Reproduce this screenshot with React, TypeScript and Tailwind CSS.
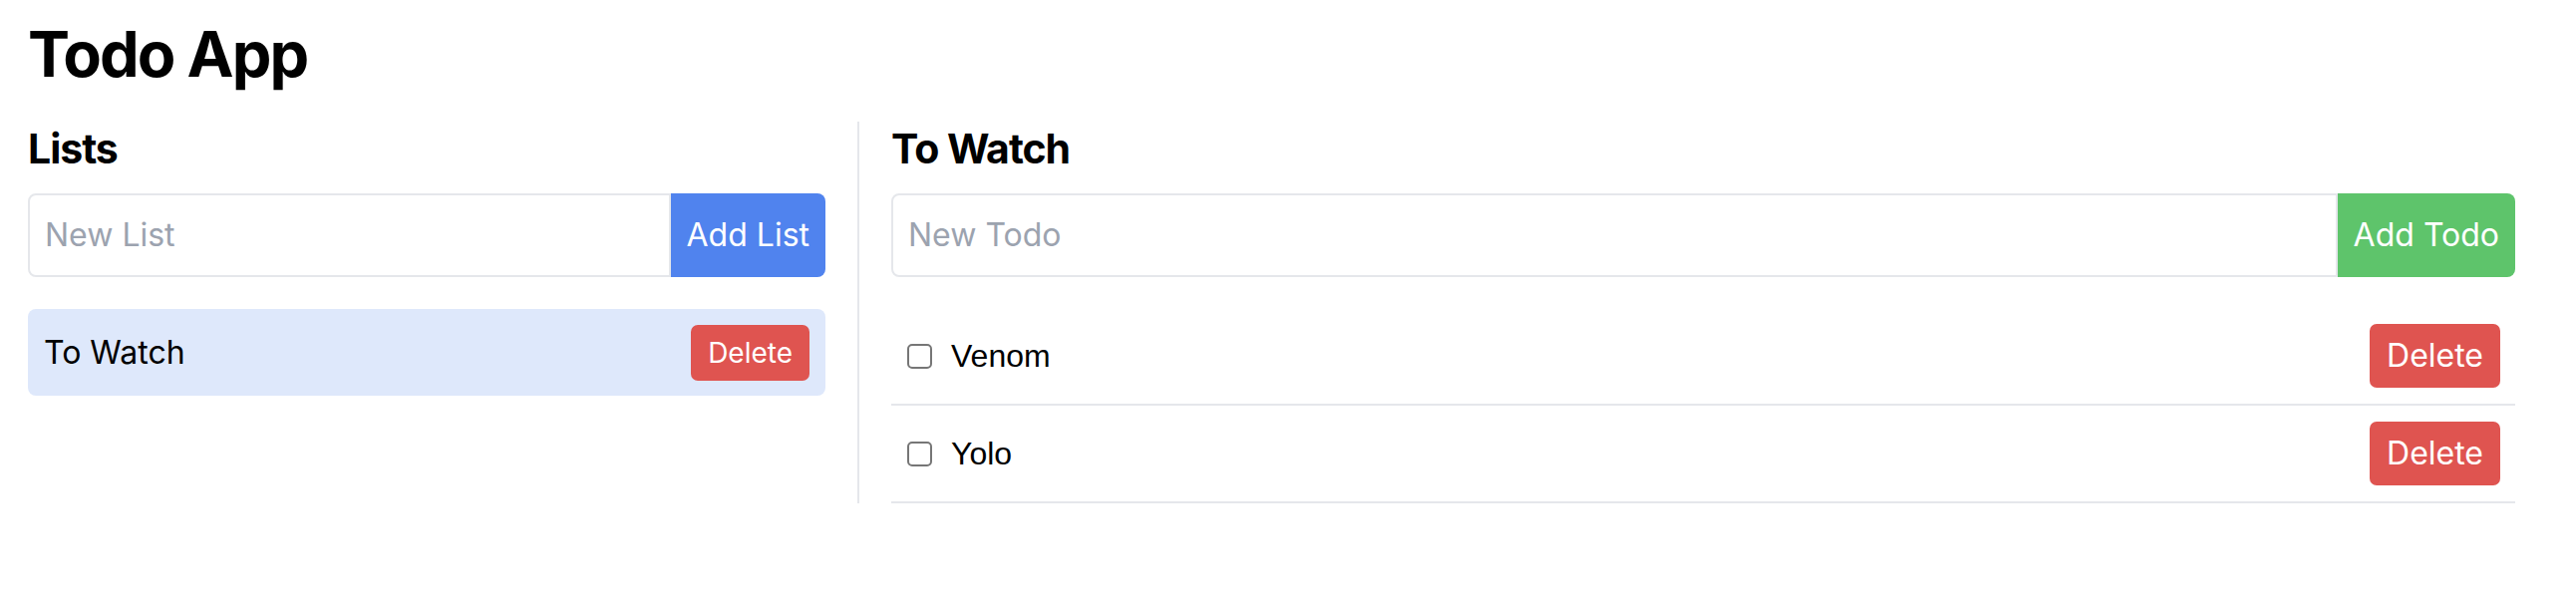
import React from "react";

export default function App() {
  const todos = ["Venom", "Yolo"];
  return (
    <div className="min-h-[606px] bg-white pl-[28px] pr-[61px] pt-[19px] font-['Inter',sans-serif] text-black">
      <h1 className="text-[63px] leading-[70px] font-bold tracking-[-0.03em] mb-[33px]">Todo App</h1>
      <div className="flex">
        <div className="w-[800px] mr-[32px]">
          <h2 className="text-[41px] leading-[55px] font-bold tracking-[-0.025em] mb-[17px]">Lists</h2>
          <div className="flex h-[84px]">
            <input
              className="flex-1 min-w-0 border-2 border-[#e5e7eb] rounded-l-[8px] px-[15px] text-[32px] outline-none placeholder:text-[#9ca3af]"
              placeholder="New List"
            />
            <button className="px-[16px] bg-[#5083ee] text-white text-[32px] rounded-r-[8px]">Add List</button>
          </div>
          <div className="mt-[32px] flex items-center justify-between bg-[#dee8fb] rounded-[8px] pl-[16px] pr-[16px] pt-[16px] pb-[15px]">
            <span className="text-[32px] leading-[48px]">To Watch</span>
            <button className="text-[28px] leading-[40px] px-[17px] py-[8px] rounded-[7px] bg-[#df5450] text-white">Delete</button>
          </div>
        </div>
        <div className="flex-1 border-l-2 border-[#e5e7eb] pl-[32px]">
          <h2 className="text-[41px] leading-[55px] font-bold tracking-[-0.025em] mb-[17px]">To Watch</h2>
          <div className="flex h-[84px]">
            <input
              className="flex-1 min-w-0 border-2 border-[#e5e7eb] rounded-l-[8px] px-[15px] text-[32px] outline-none placeholder:text-[#9ca3af]"
              placeholder="New Todo"
            />
            <button className="px-[16px] bg-[#5ec46b] text-white text-[32px] rounded-r-[8px]">Add Todo</button>
          </div>
          <ul className="mt-[31px]">
            {todos.map((t) => (
              <li key={t} className="flex items-center justify-between py-[16px] pl-[16px] pr-[15px] border-b-2 border-[#e5e7eb]">
                <div className="flex items-center">
                  <input
                    type="checkbox"
                    className="appearance-none w-[25px] h-[25px] border-2 border-[#767676] rounded-[5px] bg-white"
                  />
                  <span className="ml-[19px] text-[32px] leading-[48px] font-['Liberation_Sans',Arial,sans-serif]">{t}</span>
                </div>
                <button className="text-[32px] leading-[48px] px-[17px] py-[8px] rounded-[7px] bg-[#df5450] text-white">Delete</button>
              </li>
            ))}
          </ul>
        </div>
      </div>
    </div>
  );
}
